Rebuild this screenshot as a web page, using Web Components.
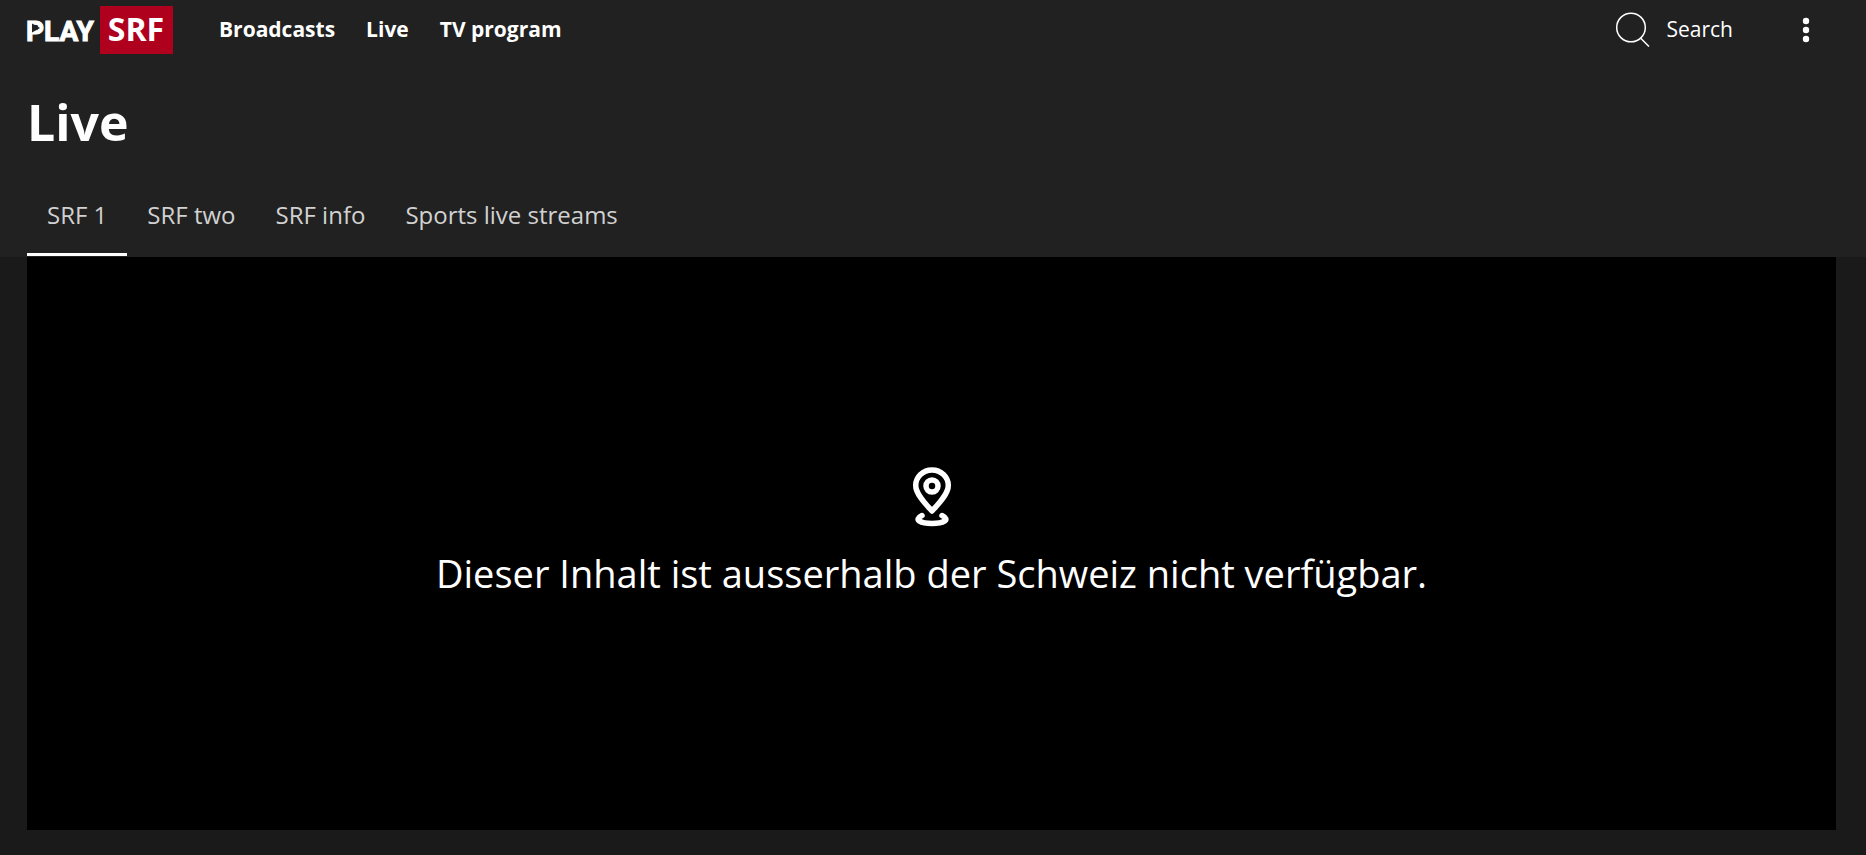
<!DOCTYPE html>
<html lang="de">
<head>
<meta charset="utf-8">
<meta name="viewport" content="width=device-width, initial-scale=1">
<title>Live - Play SRF</title>
<style>
    :root {
        --color-header: #212121;
        --color-page: #1a1a1a;
        --color-brand: #af001e;
        --color-text: #fff;
        --color-text-muted: #d1d1d1;
        --space-start: 27px;
        --space-end: 30px;
    }

    body {
        margin: 0;
        background: var(--color-page);
        color: var(--color-text);
        font-family: "Open Sans", "Noto Sans", sans-serif;
    }
</style>
</head>
<body>

<play-page>
    <play-header slot="header">
        <play-nav-link href="#broadcasts">Broadcasts</play-nav-link>
        <play-nav-link href="#live">Live</play-nav-link>
        <play-nav-link href="#tv-program">TV program</play-nav-link>
    </play-header>
    <span slot="title">Live</span>
    <play-tabs slot="tabs" labels="SRF 1|SRF two|SRF info|Sports live streams"></play-tabs>
    <play-player>Dieser Inhalt ist ausserhalb der Schweiz nicht verfügbar.</play-player>
</play-page>

<script>
/* Logo: PLAY with a play arrow in the P, SRF on the red box */
class PlayLogo extends HTMLElement {
    constructor() {
        super();
        this.attachShadow({ mode: 'open' });
        this.shadowRoot.innerHTML = `
            <style>
                :host {
                    display: block;
                }

                a, svg {
                    display: block;
                }

                svg {
                    overflow: visible;
                }

                text {
                    fill: var(--color-text);
                    font-weight: 700;
                }

                .play {
                    font-family: Roboto, sans-serif;
                    font-size: 28px;
                    stroke: var(--color-text);
                    stroke-width: 1px;
                }

                .srf {
                    font-size: 32px;
                }

                .box {
                    fill: var(--color-brand);
                }

                .arrow {
                    fill: var(--color-header);
                }
            </style>

            <a href="#home" aria-label="Play SRF">
                <svg width="146" height="48" viewBox="0 0 146 48">
                    <text class="play" x="-1" y="35">PLAY</text>
                    <path class="arrow" d="M5 17.500l8 4.500-8 4.500z"/>
                    <path class="box" d="M73 0h73v48H73z"/>
                    <text class="srf" x="109" y="35" text-anchor="middle">SRF</text>
                </svg>
            </a>
        `;
    }
}

class PlayNavLink extends HTMLElement {
    constructor() {
        super();
        this.attachShadow({ mode: 'open' });
    }

    connectedCallback() {
        this.shadowRoot.innerHTML = `
            <style>
                :host {
                    display: block;
                }

                a {
                    color: inherit;
                    font-size: 21px;
                    font-weight: 700;
                    line-height: 58px;
                    text-decoration: none;
                    white-space: nowrap;
                }

                a:hover {
                    text-decoration: underline;
                }
            </style>

            <a href="${this.getAttribute('href') || '#'}"><slot></slot></a>
        `;
    }
}

class PlayHeader extends HTMLElement {
    constructor() {
        super();
        this.attachShadow({ mode: 'open' });
        this.shadowRoot.innerHTML = `
            <style>
                :host {
                    display: block;
                }

                header {
                    display: flex;
                    align-items: flex-start;
                    padding: 0 40px 0 var(--space-start);
                    min-height: 60px;
                }

                play-logo {
                    padding: 6px 0;
                }

                nav {
                    display: flex;
                    gap: 31px;
                    margin-left: 46px;
                }

                .tools {
                    display: flex;
                    align-items: flex-start;
                    gap: 53px;
                    margin-left: auto;
                }

                button {
                    display: flex;
                    align-items: center;
                    justify-content: center;
                    gap: 16px;
                    padding: 0;
                    border: 0;
                    background: none;
                    color: inherit;
                    font: inherit;
                    font-size: 21px;
                    line-height: 58px;
                    cursor: pointer;
                }

                .menu {
                    width: 40px;
                    height: 60px;
                }
            </style>

            <header>
                <play-logo></play-logo>
                <nav aria-label="Main"><slot></slot></nav>
                <div class="tools">
                    <button type="button">
                        <svg width="36" height="36" viewBox="0 0 36 36" fill="none" stroke="currentColor" stroke-width="1.5" aria-hidden="true">
                            <circle cx="16" cy="16.500" r="14.300"/>
                            <path d="M25.500 27l8.500 8.500"/>
                        </svg>
                        <span>Search</span>
                    </button>
                    <button class="menu" type="button" aria-label="More">
                        <svg width="8" height="26" viewBox="0 0 8 26" fill="currentColor" aria-hidden="true">
                            <circle cx="4" cy="4" r="3.200"/>
                            <circle cx="4" cy="13" r="3.200"/>
                            <circle cx="4" cy="22" r="3.200"/>
                        </svg>
                    </button>
                </div>
            </header>
        `;
    }
}

class PlayTabs extends HTMLElement {
    constructor() {
        super();
        this.attachShadow({ mode: 'open' });
    }

    connectedCallback() {
        this.render();
        this.shadowRoot.addEventListener('click', (e) => {
            const tab = e.target.closest('button');
            if (tab) this._select(tab);
        });
    }

    _select(tab) {
        this.shadowRoot.querySelectorAll('button').forEach((item) => {
            item.setAttribute('aria-selected', String(item === tab));
        });
    }

    render() {
        const labels = (this.getAttribute('labels') || '').split('|');

        this.shadowRoot.innerHTML = `
            <style>
                :host {
                    display: block;
                }

                .tabs {
                    display: flex;
                    padding-bottom: 1px;
                }

                button {
                    padding: 23px 20px 20px;
                    border: 0;
                    border-bottom: 3px solid transparent;
                    background: none;
                    color: var(--color-text-muted);
                    font: inherit;
                    font-size: 24px;
                    line-height: 36px;
                    white-space: nowrap;
                    cursor: pointer;
                }

                button[aria-selected="true"] {
                    border-bottom-color: var(--color-text);
                }
            </style>

            <div class="tabs" role="tablist">
                ${labels.map((label, i) => `<button type="button" role="tab" aria-selected="${i === 0}">${label}</button>`).join('')}
            </div>
        `;
    }
}

/* Player area with the geoblock notice */
class PlayPlayer extends HTMLElement {
    constructor() {
        super();
        this.attachShadow({ mode: 'open' });
        this.shadowRoot.innerHTML = `
            <style>
                :host {
                    display: flex;
                    flex: 1;
                    flex-direction: column;
                    align-items: center;
                    justify-content: center;
                    gap: 20px;
                    padding-bottom: 22px;
                    background: #000;
                }

                p {
                    margin: 0;
                    font-size: 38px;
                    line-height: 52px;
                    text-align: center;
                }
            </style>

            <svg width="40" height="60" viewBox="0 0 40 60" fill="none" stroke="#fff" stroke-width="5.500" stroke-linecap="round" stroke-linejoin="round" aria-hidden="true">
                <path d="M20 44C15 38.500 3.700 27.500 3.700 18.500a16.300 15.500 0 0 1 32.600 0C36.300 27.500 25 38.500 20 44z"/>
                <circle cx="20" cy="19" r="6"/>
                <path d="M10 48.500C1 53 9 56.500 20 56.500s19-3.500 10-8"/>
            </svg>
            <p><slot></slot></p>
        `;
    }
}

class PlayPage extends HTMLElement {
    constructor() {
        super();
        this.attachShadow({ mode: 'open' });
        this.shadowRoot.innerHTML = `
            <style>
                :host {
                    display: flex;
                    flex-direction: column;
                    min-height: 100vh;
                }

                .top {
                    background: var(--color-header);
                }

                .intro {
                    padding: 0 var(--space-end) 0 var(--space-start);
                }

                h1 {
                    margin: 30px 0 20px;
                    font-size: 50px;
                    font-weight: 700;
                    line-height: 64px;
                }

                main {
                    display: flex;
                    flex: 1;
                    padding: 0 var(--space-end) 25px var(--space-start);
                }
            </style>

            <div class="top">
                <slot name="header"></slot>
                <div class="intro">
                    <h1><slot name="title"></slot></h1>
                    <slot name="tabs"></slot>
                </div>
            </div>
            <main><slot></slot></main>
        `;
    }
}

// Register
customElements.define('play-logo', PlayLogo);
customElements.define('play-nav-link', PlayNavLink);
customElements.define('play-header', PlayHeader);
customElements.define('play-tabs', PlayTabs);
customElements.define('play-player', PlayPlayer);
customElements.define('play-page', PlayPage);
</script>
</body>
</html>
